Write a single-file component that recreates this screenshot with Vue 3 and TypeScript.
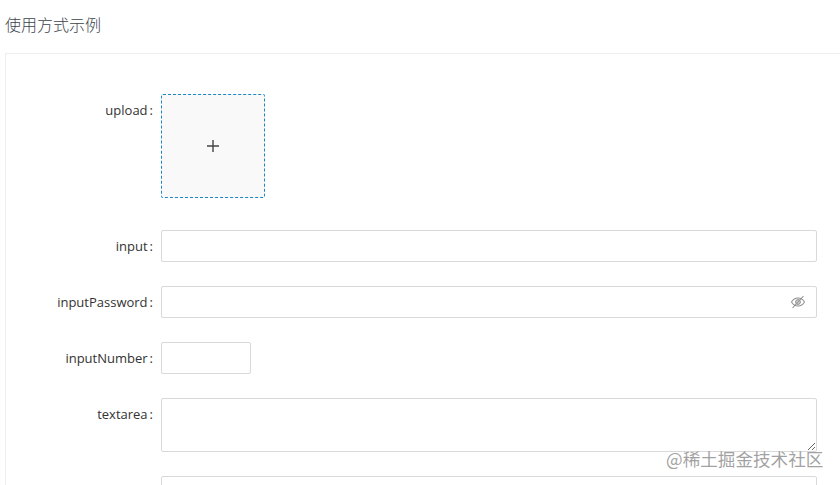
<template>
  <div class="page">
    <h2 class="page-title">使用方式示例</h2>
    <div class="card">
      <div class="form-row form-row--upload">
        <label class="form-label">upload<span class="form-colon">:</span></label>
        <div class="upload-box">
          <svg width="14" height="14" viewBox="0 0 14 14">
            <path d="M7 1v12M1 7h12" stroke="#444" stroke-width="1.4" fill="none" />
          </svg>
        </div>
      </div>
      <div class="form-row">
        <label class="form-label">input<span class="form-colon">:</span></label>
        <input class="form-input" type="text" />
      </div>
      <div class="form-row">
        <label class="form-label">inputPassword<span class="form-colon">:</span></label>
        <div class="password-wrap">
          <input class="form-input" type="password" />
          <svg class="eye-icon" width="16" height="16" viewBox="0 0 16 16" fill="none" stroke="#8f8f8f">
            <path d="M1.500 8C3 5.400 5.300 4 8 4s5 1.400 6.500 4c-1.500 2.600-3.800 4-6.500 4s-5-1.400-6.500-4z" stroke-width="1.100" />
            <circle cx="8" cy="8" r="2.400" fill="#d4d4d4" stroke-width="1" />
            <path d="M13.500 2L2.500 14" stroke-width="1.100" />
          </svg>
        </div>
      </div>
      <div class="form-row">
        <label class="form-label">inputNumber<span class="form-colon">:</span></label>
        <input class="form-input form-input--number" type="text" />
      </div>
      <div class="form-row">
        <label class="form-label">textarea<span class="form-colon">:</span></label>
        <textarea class="form-textarea"></textarea>
      </div>
      <div class="form-row">
        <label class="form-label"></label>
        <input class="form-input" type="text" />
      </div>
    </div>
    <div class="watermark">@稀土掘金技术社区</div>
  </div>
</template>

<script setup lang="ts">
</script>

<style>
html,
body {
  margin: 0;
  overflow: hidden;
}
</style>

<style scoped>
.page {
  position: relative;
  width: 840px;
  height: 485px;
  overflow: hidden;
  background: #fff;
  font-family: "Open Sans", "Noto Sans CJK SC", sans-serif;
}

.page-title {
  margin: 0;
  height: 53px;
  padding-left: 5px;
  font-size: 16px;
  font-weight: 300;
  line-height: 48px;
  color: #3c434b;
  font-family: "Noto Sans CJK SC", sans-serif;
}

.card {
  width: 850px;
  margin-left: 5px;
  padding: 40px 0 0;
  border: 1px solid #eeeeee;
  box-sizing: border-box;
}

.form-row {
  display: flex;
  margin-bottom: 24px;
}

.form-row--upload {
  margin-bottom: 32px;
}

.form-label {
  flex: none;
  width: 155px;
  height: 32px;
  line-height: 32px;
  font-size: 13px;
  color: #333;
  text-align: right;
  white-space: nowrap;
}

.form-colon {
  margin: 0 8px 0 2px;
}

.upload-box {
  display: flex;
  align-items: center;
  justify-content: center;
  width: 104px;
  height: 104px;
  box-sizing: border-box;
  border: 1px dashed #1c86c8;
  border-radius: 2px;
  background: #f9f9f9;
}

.form-input {
  display: block;
  width: 656px;
  height: 32px;
  box-sizing: border-box;
  padding: 4px 11px;
  border: 1px solid #d9d9d9;
  border-radius: 2px;
  outline: none;
}

.form-input--number {
  width: 90px;
}

.password-wrap {
  position: relative;
}

.eye-icon {
  position: absolute;
  top: 8px;
  right: 11px;
}

.form-textarea {
  display: block;
  width: 656px;
  height: 54px;
  box-sizing: border-box;
  padding: 4px 11px;
  border: 1px solid #d9d9d9;
  border-radius: 2px;
  outline: none;
  resize: vertical;
}

.watermark {
  position: absolute;
  left: 666px;
  top: 447px;
  font-size: 17.6px;
  line-height: 24px;
  color: rgba(130, 130, 130, 0.75);
  font-family: "Noto Sans CJK SC", sans-serif;
  white-space: nowrap;
}
</style>
